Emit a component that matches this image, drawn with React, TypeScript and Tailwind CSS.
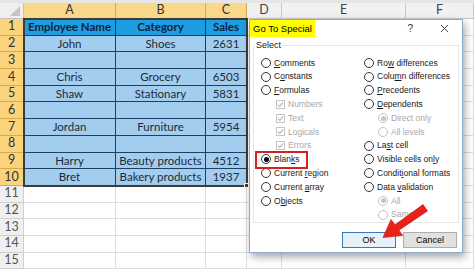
import React from 'react';

const rows: string[][] = [
  ['Employee Name', 'Category', 'Sales'],
  ['John', 'Shoes', '2631'],
  ['', '', ''],
  ['Chris', 'Grocery', '6503'],
  ['Shaw', 'Stationary', '5831'],
  ['', '', ''],
  ['Jordan', 'Furniture', '5954'],
  ['', '', ''],
  ['Harry', 'Beauty products', '4512'],
  ['Bret', 'Bakery products', '1937'],
];

const cols = ['A', 'B', 'C', 'D', 'E', 'F'];

function Radio({ checked, disabled }: { checked?: boolean; disabled?: boolean }) {
  return (
    <span
      className={`flex h-[10px] w-[10px] shrink-0 items-center justify-center rounded-full border bg-white ${
        disabled ? 'border-[#c4c4c4]' : 'border-[#333]'
      }`}
    >
      {checked && <span className={`h-[5px] w-[5px] rounded-full ${disabled ? 'bg-[#c4c4c4]' : 'bg-black'}`} />}
    </span>
  );
}

function Check() {
  return (
    <span className="flex h-[9px] w-[9px] shrink-0 items-center justify-center border border-[#c4c4c4] bg-white">
      <svg width="7" height="7" viewBox="0 0 8 8">
        <path d="M1 4.2 L3.1 6.2 L7 1.6" fill="none" stroke="#b4b4b4" strokeWidth="1.2" />
      </svg>
    </span>
  );
}

// label with an underlined access key
function L({ t, k }: { t: string; k?: number }) {
  if (k === undefined) return <span>{t}</span>;
  return (
    <span>
      {t.slice(0, k)}
      <span className="underline underline-offset-1">{t[k]}</span>
      {t.slice(k + 1)}
    </span>
  );
}

function Opt({ label, k, checked, disabled, indent = 0, box }: { label: string; k?: number; checked?: boolean; disabled?: boolean; indent?: number; box?: boolean }) {
  return (
    <div className="flex h-[13.8px] items-center gap-[3px] whitespace-nowrap" style={{ paddingLeft: indent }}>
      {box ? <Check /> : <Radio checked={checked} disabled={disabled} />}
      <span className={disabled ? 'text-[#a8a8a8]' : 'text-[#1a1a1a]'}>
        <L t={label} k={k} />
      </span>
    </div>
  );
}

function Dialog() {
  return (
    <div className="absolute left-[249px] top-[19px] flex h-[234px] w-[214px] flex-col border border-[#8aaed0] bg-white text-[8.5px] leading-none shadow-[2px_4px_8px_rgba(0,0,0,0.35)] [font-family:'Liberation_Sans','Noto_Sans',sans-serif]">
      <div className="flex h-[17px] items-center">
        <div className="flex h-full items-center bg-[#ffff00] px-[3px] text-[9.5px] text-black">Go To Special</div>
        <div className="ml-auto mr-[27px] text-[10px] text-[#333]">?</div>
        <svg width="9" height="9" viewBox="0 0 10 10" className="mr-[13px]">
          <path d="M1 1 L9 9 M9 1 L1 9" stroke="#333" strokeWidth="1" />
        </svg>
      </div>
      <div className="relative mx-[3px] mt-[8px] h-[178px] border border-[#e6e6e6]">
        <div className="absolute -top-[5px] left-[1px] bg-white px-[1px] text-[9px] text-[#1a1a1a]">Select</div>
        <div className="flex pt-[10px] pl-[7px]">
          <div className="w-[103px]">
            <Opt label="Comments" k={0} />
            <Opt label="Constants" k={1} />
            <Opt label="Formulas" k={0} />
            <Opt label="Numbers" box disabled indent={15} />
            <Opt label="Text" box disabled indent={15} />
            <Opt label="Logicals" box disabled indent={15} />
            <Opt label="Errors" box disabled indent={15} />
            <div className="relative">
              <div className="absolute -left-[6px] -top-[2px] h-[18px] w-[53px] border-2 border-[#d42020]" />
              <Opt label="Blanks" k={4} checked />
            </div>
            <Opt label="Current region" k={8} />
            <Opt label="Current array" k={8} />
            <Opt label="Objects" k={1} />
          </div>
          <div>
            <Opt label="Row differences" k={2} />
            <Opt label="Column differences" k={4} />
            <Opt label="Precedents" k={0} />
            <Opt label="Dependents" k={0} />
            <Opt label="Direct only" checked disabled indent={14} />
            <Opt label="All levels" disabled indent={14} />
            <Opt label="Last cell" k={2} />
            <Opt label="Visible cells only" k={16} />
            <Opt label="Conditional formats" k={6} />
            <Opt label="Data validation" k={5} />
            <Opt label="All" checked disabled indent={14} />
            <Opt label="Same" disabled indent={14} />
          </div>
        </div>
      </div>
      <div className="mt-[9px] flex justify-end gap-[7px] pr-[5px] text-[9px]">
        <div className="flex h-[16px] w-[54px] items-center justify-center border border-[#3d7ab4] bg-[#e5f1fb] text-black">OK</div>
        <div className="flex h-[16px] w-[54px] items-center justify-center border border-[#adadad] bg-[#e1e1e1] text-black">Cancel</div>
      </div>
    </div>
  );
}

export default function App() {
  return (
    <div className="relative h-[269px] w-[474px] overflow-hidden bg-white [font-family:'Lato','Open_Sans',sans-serif] text-[#1b1b1b]">
      <div className="h-[3px] bg-[#e6e6e6]" />
      <div className="grid grid-cols-[24px_92px_90px_41px_35px_124px_68px] grid-rows-[16px_repeat(15,16.7px)]">
        <div className="relative border-r border-b border-[#c4c4c4] bg-[#efefef]">
          <svg width="10" height="10" viewBox="0 0 12 12" className="absolute bottom-[2px] right-[3px]">
            <path d="M12 0 L12 12 L0 12 Z" fill="#c4c4c4" />
          </svg>
        </div>
        {cols.map((c, i) => (
          <div
            key={c}
            className={`flex items-center justify-center border-r border-b text-[12.5px] ${
              i < 3 ? 'border-[#d9a94a] bg-[#f9d88a] text-[#333]' : 'border-[#c8c8c8] bg-[#f1f1f1] text-[#444]'
            }`}
          >
            {c}
          </div>
        ))}
        {Array.from({ length: 15 }, (_, r) => (
          <React.Fragment key={r}>
            <div
              className={`flex items-center justify-center border-r border-b text-[12.5px] ${
                r < 10 ? 'border-[#d9a94a] bg-[#f9d47c] text-[#333]' : 'border-[#cfcfcf] bg-[#f0f0f0] text-[#555]'
              }`}
            >
              {r + 1}
            </div>
            {cols.map((c, i) => {
              const sel = r < 10 && i < 3;
              const text = sel ? rows[r][i] : '';
              return (
                <div
                  key={c}
                  className={`flex items-center justify-center overflow-hidden whitespace-nowrap border-r border-b text-[11.5px] ${
                    sel
                      ? r === 0
                        ? 'border-[#1d3f66] bg-[#1e9ee0] font-bold text-[#0e2440]'
                        : 'border-[#1d3f66] bg-[#a3cdee] text-[#1e2a38]'
                      : 'border-[#dedede] bg-white'
                  }`}
                >
                  {text}
                </div>
              );
            })}
          </React.Fragment>
        ))}
      </div>
      {/* selected range outline */}
      <div className="pointer-events-none absolute left-[23px] top-[18px] h-[169px] w-[225px] border-2 border-[#3c3c3c]">
        <div className="absolute -bottom-[3px] -right-[3px] h-[5px] w-[5px] border border-white bg-[#3c3c3c]" />
      </div>
      <Dialog />
      <svg className="pointer-events-none absolute left-0 top-0" width="474" height="269" viewBox="0 0 474 269">
        <polygon
          points="427.5,211 399,230.2 402.8,235.5 383,237.5 391,219.4 395,224.8 423,204.6"
          fill="#e8221b"
          stroke="#c01010"
          strokeWidth="0.6"
          strokeLinejoin="round"
        />
      </svg>
    </div>
  );
}
